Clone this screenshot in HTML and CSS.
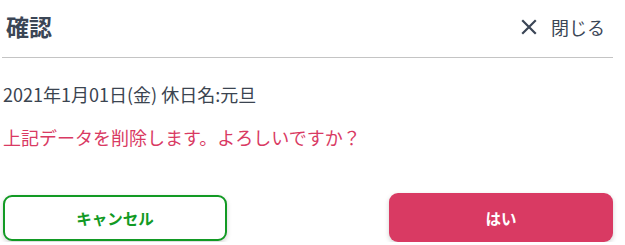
FILE: index.html
```html
<!DOCTYPE html>
<html lang="ja">
<head>
    <meta charset="UTF-8">
    <title>確認</title>
<link rel="stylesheet" href="styles.css">
</head>
<body>
    <div class="dialog">
        <div class="dialog-header">
            <h1 class="dialog-title">確認</h1>
            <button class="close-button" type="button">
                <svg class="close-icon" width="16" height="16" viewBox="0 0 16 16">
                    <path d="M2 2 L14 14 M14 2 L2 14" stroke="#3b4656" stroke-width="2.2" stroke-linecap="square" fill="none"/>
                </svg>
                <span>閉じる</span>
            </button>
        </div>

        <div class="dialog-body">
            <p class="holiday">2021年1月01日(金) 休日名:元旦</p>
            <p class="warning">上記データを削除します。よろしいですか？</p>
        </div>

        <div class="dialog-actions">
            <button class="button button-cancel" type="button">キャンセル</button>
            <button class="button button-ok" type="button">はい</button>
        </div>
    </div>
</body>
</html>
```

FILE: styles.css
```css
* {
    box-sizing: border-box;
}

body, button {
    font-family: 'Noto Sans CJK JP', 'Noto Sans', sans-serif;
}

body {
    margin: 0;
    color: #3b4450;
    background-color: #fff;
}

.dialog {
    width: 611px;
    margin-left: 2px;
}

.dialog-header {
    display: flex;
    align-items: center;
    justify-content: space-between;
    height: 58px;
    border-bottom: 1px solid #c4c4c4;
}

.dialog-title {
    margin: 0 0 4px 4px;
    font-size: 23px;
    font-weight: bold;
    color: #3b4656;
    line-height: 1;
}

.close-button {
    display: flex;
    align-items: center;
    gap: 14px;
    border: 0;
    background: none;
    padding: 0 8px 4px 0;
    font-size: 18px;
    color: #3b4656;
    cursor: pointer;
}

.close-icon {
    display: block;
}

.dialog-body {
    padding-top: 23px;
}

.holiday, .warning {
    margin: 0 0 0 1px;
    font-size: 18px;
    line-height: 26px;
}

.warning {
    margin-top: 17px;
    color: #d93a63;
}

.dialog-actions {
    display: flex;
    justify-content: space-between;
    align-items: center;
    margin-top: 43px;
}

.button {
    width: 224px;
    border-radius: 9px;
    font-size: 15.5px;
    font-weight: bold;
    cursor: pointer;
    box-shadow: 0 2px 5px rgba(0, 0, 0, 0.18);
}

.button-cancel {
    height: 46px;
    margin-left: 1px;
    border: 2px solid #129a24;
    background-color: #fff;
    color: #129a24;
}

.button-ok {
    height: 49px;
    border: 0;
    background-color: #d93a63;
    color: #fff;
}
```
